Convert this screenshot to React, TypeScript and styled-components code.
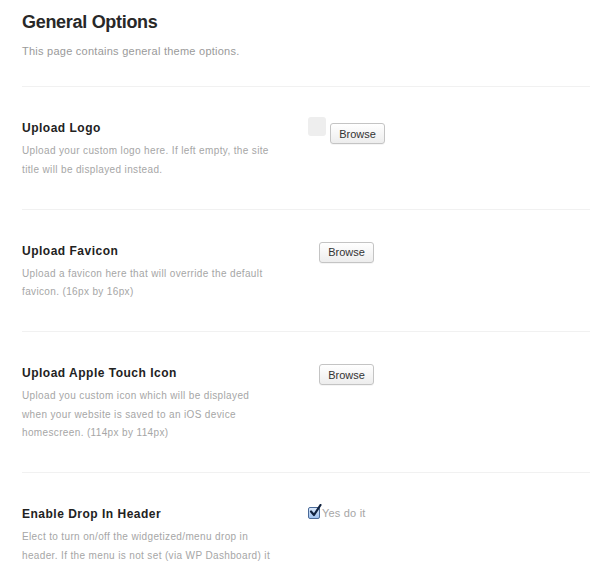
import React from "react";
import styled, { createGlobalStyle } from "styled-components";

const GlobalStyle = createGlobalStyle`
  html, body { margin: 0; padding: 0; background: #ffffff; }
  body { font-family: "Liberation Sans", Arial, Helvetica, sans-serif; }
`;

const Page = styled.div`
  padding: 13px 0 0 22px;
`;

const Title = styled.h1`
  margin: 0;
  font-size: 18px;
  line-height: 18px;
  font-weight: bold;
  letter-spacing: -0.3px;
  color: #282828;
`;

const Subtitle = styled.p`
  margin: 11px 0 0;
  font-size: 11px;
  line-height: 18px;
  letter-spacing: 0.25px;
  color: #9a9a9a;
`;

const Divider = styled.hr`
  border: 0;
  height: 1px;
  background: #f1f1f1;
  margin: 26px 4px 0 0;
`;

const Section = styled.section`
  display: grid;
  grid-template-columns: 286px 1fr;
  padding: 33px 0 29.5px;
  box-sizing: border-box;
  border-bottom: 1px solid #f1f1f1;
  margin-right: 4px;
`;

const Info = styled.div`
  display: flex;
  flex-direction: column;
`;

const OptionName = styled.h3`
  margin: 0 0 6px;
  font-size: 12px;
  line-height: 16px;
  font-weight: bold;
  letter-spacing: 0.5px;
  color: #222;
`;

const Desc = styled.p`
  margin: 0;
  width: 250px;
  font-size: 10px;
  line-height: 18.5px;
  letter-spacing: 0.36px;
  color: #a6a6a6;
`;

const Controls = styled.div<{ $offset: number }>`
  display: flex;
  align-items: flex-start;
  gap: 4px;
  margin-top: ${(p) => p.$offset}px;
`;

const Preview = styled.span`
  display: block;
  width: 18px;
  height: 19px;
  border-radius: 3px;
  background: #eeeeee;
`;

const Button = styled.button<{ $indent?: number; $drop?: number }>`
  margin: ${(p) => p.$drop ?? 0}px 0 0 ${(p) => p.$indent ?? 0}px;
  width: 55px;
  height: 21px;
  padding: 0;
  border: 1px solid #c4c4c4;
  border-radius: 3px;
  background: linear-gradient(#ffffff, #ededed);
  font-family: "Liberation Sans", Arial, Helvetica, sans-serif;
  font-size: 11px;
  color: #333;
  box-shadow: 0 1px 0 rgba(0, 0, 0, 0.04);
`;

const CheckLabel = styled.label`
  display: flex;
  align-items: center;
  gap: 2px;
  font-size: 11px;
  line-height: 14px;
  color: #a6a6a6;
  letter-spacing: 0.2px;
`;

const CheckBox = styled.span`
  position: relative;
  display: inline-block;
  width: 10px;
  height: 10px;
  border: 1px solid #4a6a98;
  border-radius: 2px;
  background: linear-gradient(#dbe9fb, #9ec1ee);
`;

const Tick = styled.svg`
  position: absolute;
  left: 0px;
  top: -4px;
  width: 13px;
  height: 14px;
`;

export default function App() {
  return (
    <>
      <GlobalStyle />
      <Page>
        <Title>General Options</Title>
        <Subtitle>This page contains general theme options.</Subtitle>
        <Divider />

        <Section>
          <Info>
            <OptionName>Upload Logo</OptionName>
            <Desc>
              Upload your custom logo here. If left empty, the site title will be displayed instead.
            </Desc>
          </Info>
          <Controls $offset={-3}>
            <Preview />
            <Button $drop={6}>Browse</Button>
          </Controls>
        </Section>

        <Section>
          <Info>
            <OptionName>Upload Favicon</OptionName>
            <Desc>Upload a favicon here that will override the default favicon. (16px by 16px)</Desc>
          </Info>
          <Controls $offset={-1}>
            <Button $indent={11}>Browse</Button>
          </Controls>
        </Section>

        <Section>
          <Info>
            <OptionName>Upload Apple Touch Icon</OptionName>
            <Desc>
              Upload you custom icon which will be displayed when your website is saved to an iOS device
              homescreen. (114px by 114px)
            </Desc>
          </Info>
          <Controls $offset={-1}>
            <Button $indent={11}>Browse</Button>
          </Controls>
        </Section>

        <Section>
          <Info>
            <OptionName>Enable Drop In Header</OptionName>
            <Desc>
              Elect to turn on/off the widgetized/menu drop in header. If the menu is not set (via WP
              Dashboard) it will display the default pages.
            </Desc>
          </Info>
          <Controls $offset={0}>
            <CheckLabel>
              <CheckBox>
                <Tick viewBox="0 0 13 14">
                  <path d="M2 7.5 L5 11 L11.5 1" fill="none" stroke="#10223f" strokeWidth="2.2" strokeLinecap="round" strokeLinejoin="round" />
                </Tick>
              </CheckBox>
              Yes do it
            </CheckLabel>
          </Controls>
        </Section>
      </Page>
    </>
  );
}
